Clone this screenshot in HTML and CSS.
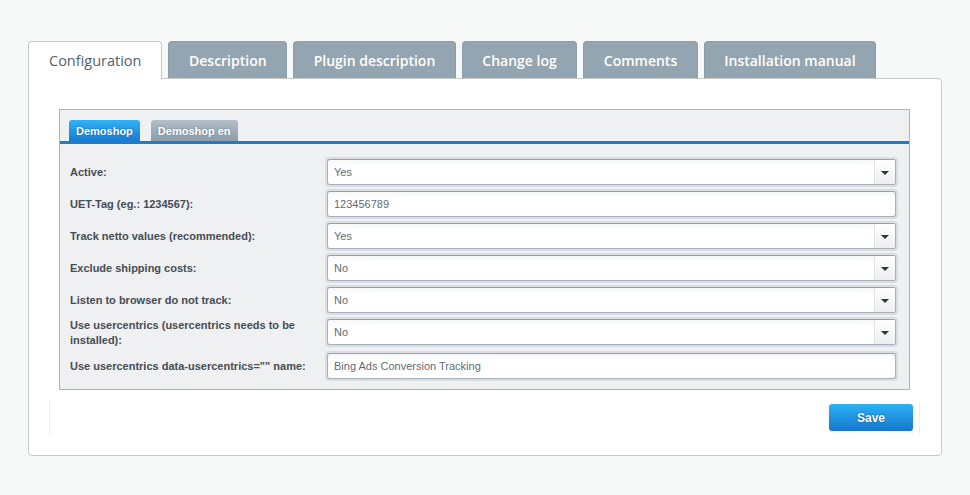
FILE: index.html
```html
<!DOCTYPE html>
<html>
<head>
<meta charset="utf-8">
<link rel="stylesheet" href="styles.css">
</head>
<body>
<div class="page">
  <div class="tabs">
    <div class="tab active">Configuration</div>
    <div class="tab">Description</div>
    <div class="tab">Plugin description</div>
    <div class="tab">Change log</div>
    <div class="tab">Comments</div>
    <div class="tab">Installation manual</div>
  </div>
  <div class="panel">
    <div class="box">
      <div class="subtabs">
        <div class="subtab on">Demoshop</div>
        <div class="subtab">Demoshop en</div>
      </div>
      <div class="form">
        <div class="row">
          <div class="label">Active:</div>
          <div class="ring"><div class="field select"><span class="val">Yes</span><span class="btn"><i class="arrow"></i></span></div></div>
        </div>
        <div class="row">
          <div class="label">UET-Tag (eg.: 1234567):</div>
          <div class="ring"><div class="field"><span class="val">123456789</span></div></div>
        </div>
        <div class="row">
          <div class="label">Track netto values (recommended):</div>
          <div class="ring"><div class="field select"><span class="val">Yes</span><span class="btn"><i class="arrow"></i></span></div></div>
        </div>
        <div class="row">
          <div class="label">Exclude shipping costs:</div>
          <div class="ring"><div class="field select"><span class="val">No</span><span class="btn"><i class="arrow"></i></span></div></div>
        </div>
        <div class="row">
          <div class="label">Listen to browser do not track:</div>
          <div class="ring"><div class="field select"><span class="val">No</span><span class="btn"><i class="arrow"></i></span></div></div>
        </div>
        <div class="row tall">
          <div class="label">Use usercentrics (usercentrics needs to be installed):</div>
          <div class="ring"><div class="field select"><span class="val">No</span><span class="btn"><i class="arrow"></i></span></div></div>
        </div>
        <div class="row">
          <div class="label">Use usercentrics data-usercentrics="" name:</div>
          <div class="ring"><div class="field"><span class="val">Bing Ads Conversion Tracking</span></div></div>
        </div>
      </div>
    </div>
    <div class="toolbar">
      <button class="save">Save</button>
    </div>
  </div>
</div>
</body>
</html>
```
FILE: styles.css
```css
html, body {
  margin: 0;
  padding: 0;
  background: #f7f8f8;
}
.page {
  padding: 41px 0 0 28px;
  width: 914px;
}
.tabs {
  display: flex;
  gap: 6px;
  height: 37px;
  position: relative;
  z-index: 2;
}
.tab {
  box-sizing: border-box;
  height: 37px;
  padding: 2px 19.5px 0;
  background: #93a5b1;
  border: 1px solid #8c9eab;
  border-bottom: none;
  border-radius: 4px 4px 0 0;
  color: #fff;
  font-family: "Open Sans", sans-serif;
  font-weight: 600;
  font-size: 14px;
  line-height: 33px;
  white-space: nowrap;
}
.tab.active {
  height: 38px;
  padding: 2px 20px 0;
  background: #fff;
  border-color: #c4c8c8;
  color: #56626e;
  font-weight: 400;
  font-size: 14.5px;
}
.panel {
  background: #fff;
  border: 1px solid #c5c9c9;
  border-radius: 0 4px 4px 4px;
  padding: 30px 31px 21px 30px;
}
.box {
  background: #eff0f2;
  border: 1px solid #a9b6c0;
  padding-bottom: 7px;
}
.subtabs {
  display: flex;
  gap: 11px;
  padding: 10px 0 0 9px;
  border-bottom: 3px solid #1c7dcf;
}
.subtab {
  height: 21px;
  padding: 0 7px;
  border-radius: 3px 3px 0 0;
  background: linear-gradient(#b3bec7, #8d9daa);
  color: #fff;
  font-family: "Liberation Sans", Arial, sans-serif;
  font-weight: bold;
  font-size: 11px;
  line-height: 22px;
  text-shadow: 0 0 2px #6b7b88;
}
.subtab.on {
  background: linear-gradient(#31b3f5, #177bd2);
  text-shadow: 0 0 2px #1258a6;
}
.form {
  padding: 12px 11px 0 10px;
}
.row {
  display: grid;
  grid-template-columns: 255px 1fr;
  min-height: 32px;
  align-items: start;
}
.row.tall {
  min-height: 34px;
}
.label {
  align-self: center;
  padding: 2px 10px 2px 0;
  font-family: "Liberation Sans", Arial, sans-serif;
  font-weight: bold;
  font-size: 11px;
  line-height: 15px;
  color: #454d55;
}
.ring {
  background: #d9dce0;
  border-radius: 4px;
  padding: 2px;
  margin-top: 1px;
}
.field {
  display: flex;
  height: 24px;
  background: linear-gradient(#f6f7f8, #fff 6px);
  border: 1px solid #a8b1b9;
  border-top-color: #98a2ab;
  border-radius: 3px;
  font-family: "Liberation Sans", Arial, sans-serif;
  font-size: 11px;
  color: #5f6b77;
  line-height: 25px;
}
.val {
  flex: 1;
  padding-left: 6px;
}
.btn {
  width: 20px;
  border-left: 1px solid #dfe2e5;
  background: linear-gradient(#fff, #eceef0);
  border-radius: 0 2px 2px 0;
  display: flex;
  align-items: center;
  justify-content: center;
}
.arrow {
  width: 0;
  height: 0;
  border-left: 4px solid transparent;
  border-right: 4px solid transparent;
  border-top: 4px solid #2f3438;
  margin-top: 1px;
}
.toolbar {
  margin: 11px -10px 0 -10px;
  height: 33px;
  border-left: 1px solid #eef0f0;
  border-right: 1px solid #eef0f0;
  display: flex;
  justify-content: flex-end;
  align-items: flex-start;
  padding: 3px 6px 0 0;
  box-sizing: border-box;
}
.save {
  width: 84px;
  height: 27px;
  border: none;
  border-radius: 3px;
  background: linear-gradient(#2cb1f3, #1677cf);
  color: #fff;
  font-family: "Liberation Sans", Arial, sans-serif;
  font-weight: bold;
  font-size: 12px;
  text-shadow: 0 0 2px #0d4f94;
  padding: 0;
}
```
